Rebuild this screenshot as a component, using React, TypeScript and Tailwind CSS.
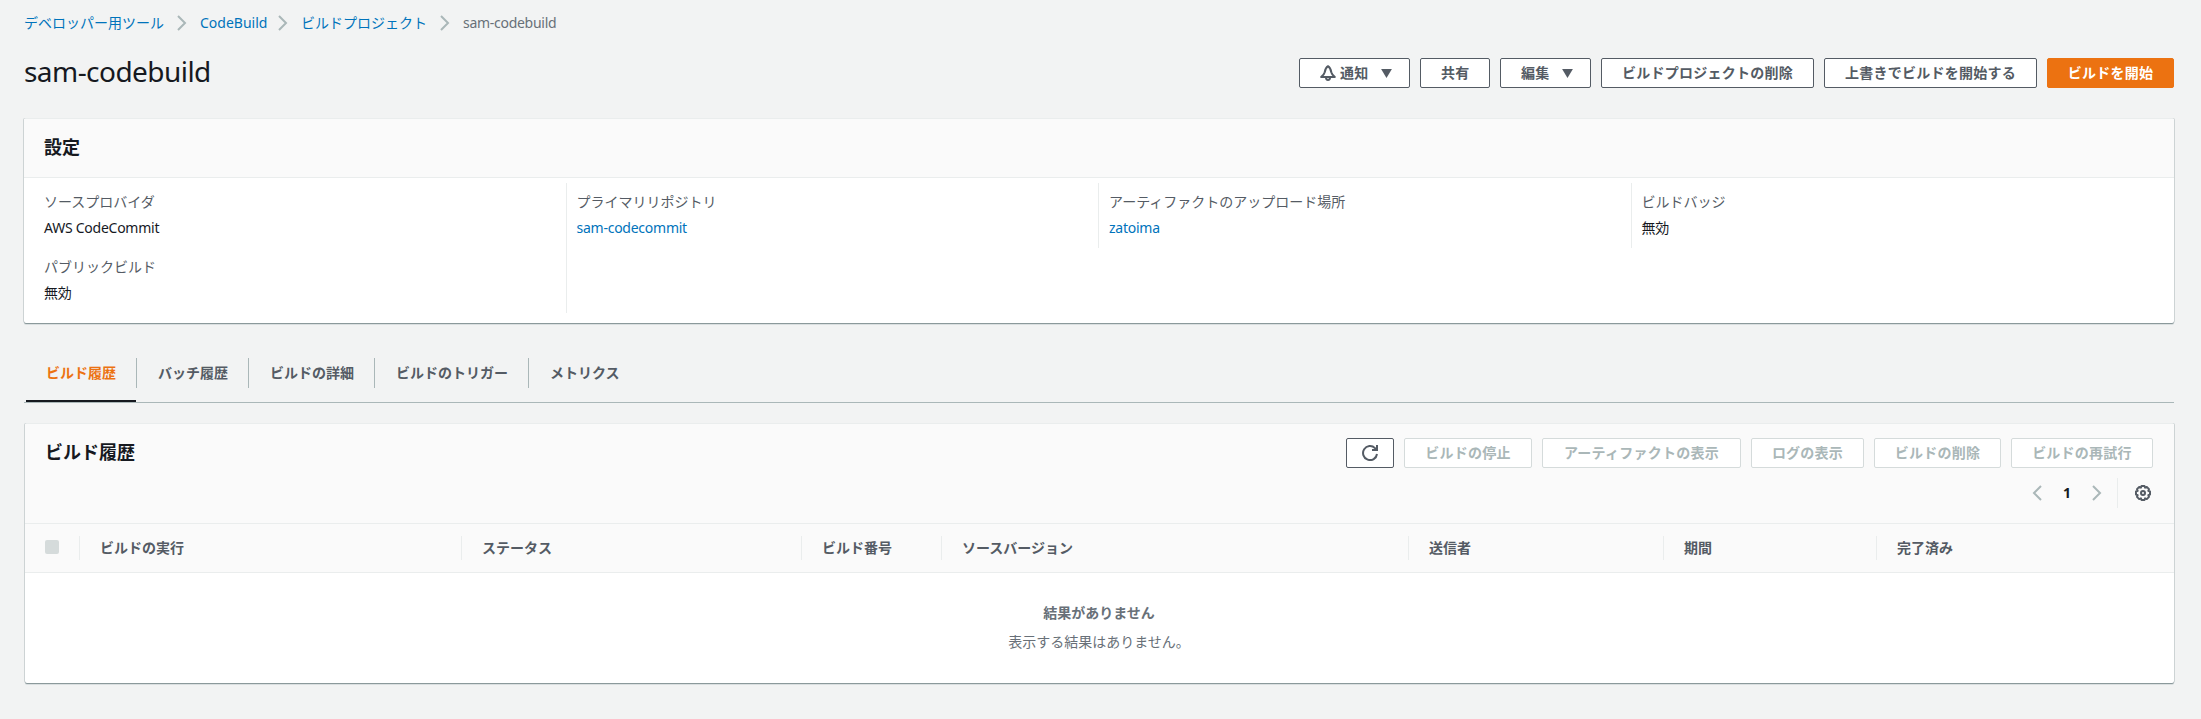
import React from "react";

function Chevron({ dir = "right", className = "" }: { dir?: "left" | "right"; className?: string }) {
  return (
    <svg viewBox="0 0 16 16" className={`h-4 w-4 shrink-0 ${className}`} fill="none" stroke="#aab7b8" strokeWidth="2">
      <path d={dir === "right" ? "M4 1l7 7-7 7" : "M12 1L5 8l7 7"} />
    </svg>
  );
}

function Caret() {
  return (
    <svg viewBox="0 0 12 10" className="h-[9px] w-[11px] shrink-0" fill="#545b64">
      <path d="M0 0h12L6 10z" />
    </svg>
  );
}

function Bell() {
  return (
    <svg viewBox="0 0 16 16" className="h-4 w-4 shrink-0" fill="none" stroke="#545b64" strokeWidth="2" strokeLinejoin="round">
      <path d="M8 1.200C5.600 2.600 5.200 4.600 4.700 7.200 4.300 9 3.200 10.200 1.200 12h13.600c-2-1.800-3.100-3-3.500-4.800C10.800 4.600 10.400 2.600 8 1.200z" />
      <path d="M6 12.500c0 3.200 4 3.200 4 0" />
    </svg>
  );
}

function Refresh() {
  return (
    <svg viewBox="0 0 16 16" className="h-4 w-4 shrink-0" fill="none" stroke="#545b64" strokeWidth="2">
      <path d="M15 9a7 7 0 1 1-2-5.900L14.500 5" />
      <path d="M15 0v5H10" />
    </svg>
  );
}

function Gear() {
  return (
    <svg viewBox="0 0 16 16" className="h-4 w-4 shrink-0" fill="none" stroke="#545b64" strokeWidth="2" strokeLinejoin="round">
      <path d="M6.500 1h3l.6 1.600 1.700-.7 2.200 2.200-.7 1.700 1.700.7v3l-1.700.7.7 1.700-2.200 2.200-1.700-.7-.6 1.600h-3l-.6-1.600-1.700.7L2 11.900l.7-1.700L1 9.500v-3l1.700-.7L2 4.100l2.200-2.200 1.700.7z" />
      <circle cx="8" cy="8" r="2" />
    </svg>
  );
}

const buttonBase =
  "flex h-[30px] shrink-0 items-center rounded-[2px] border text-[14px] font-bold leading-[20px] tracking-[0.25px] whitespace-nowrap";

function Button({ children, className = "" }: { children: React.ReactNode; className?: string }) {
  return <button className={`${buttonBase} border-[#545b64] bg-white text-[#545b64] ${className}`}>{children}</button>;
}

function DisabledButton({ children, className = "" }: { children: React.ReactNode; className?: string }) {
  return (
    <button disabled className={`${buttonBase} justify-center border-[#d5dbdb] bg-white text-[#aab7b8] ${className}`}>
      {children}
    </button>
  );
}

function Field({ label, value, link }: { label: string; value: string; link?: boolean }) {
  return (
    <div className="h-[65px] pt-[8px] text-[14px] leading-[22px]">
      <div className="text-[#545b64]">{label}</div>
      <div className={`mt-[4px] tracking-[-0.25px] ${link ? "text-[#0073bb]" : "text-[#16191f]"}`}>{value}</div>
    </div>
  );
}

const panel =
  "rounded-[2px] border-t border-[#eaeded] bg-white shadow-[0_1px_0_0_#8b999b,0_2px_0_0_#dadfe0,1px_0_0_0_#cdd3d4,-1px_0_0_0_#cdd3d4]";

const tabs = [
  { label: "ビルド履歴", width: "w-[110px]" },
  { label: "バッチ履歴", width: "w-[112px]" },
  { label: "ビルドの詳細", width: "w-[126px]" },
  { label: "ビルドのトリガー", width: "w-[154px]" },
  { label: "メトリクス", width: "w-[112px]" },
];

const columns = [
  { label: "ビルドの実行", width: "w-[382px]" },
  { label: "ステータス", width: "w-[340px]" },
  { label: "ビルド番号", width: "w-[140px]" },
  { label: "ソースバージョン", width: "w-[467px]" },
  { label: "送信者", width: "w-[255px]" },
  { label: "期間", width: "w-[213px]" },
  { label: "完了済み", width: "w-[200px]" },
];

export default function App() {
  return (
    <div className="flex h-[719px] w-[2201px] flex-col overflow-hidden bg-[#f2f3f3] pl-[24px] font-['Noto_Sans','Noto_Sans_CJK_JP',sans-serif] text-[14px] leading-[22px] text-[#16191f]">
      <nav className="mt-[12px] flex h-[22px] items-center">
        <a className="w-[140px] text-[#0073bb]">デベロッパー用ツール</a>
        <Chevron className="mx-[10px]" />
        <a className="w-[65px] text-[#0073bb]">CodeBuild</a>
        <Chevron className="mx-[10px]" />
        <a className="w-[126px] text-[#0073bb]">ビルドプロジェクト</a>
        <Chevron className="mx-[10px]" />
        <span className="tracking-[-0.28px] text-[#687078]">sam-codebuild</span>
      </nav>

      <header className="mt-[21px] flex h-[36px] w-[2150px] items-center justify-between">
        <h1 className="-mt-[4px] text-[28px] leading-[36px] tracking-[-0.55px]">sam-codebuild</h1>
        <div className="flex gap-[10px]">
          <Button className="w-[111px] pl-[20px]">
            <Bell />
            <span className="ml-[4px] mr-[12px]">通知</span>
            <Caret />
          </Button>
          <Button className="w-[70px] pl-[20px]">共有</Button>
          <Button className="w-[91px] pl-[20px]">
            <span className="mr-[12px]">編集</span>
            <Caret />
          </Button>
          <Button className="w-[213px] pl-[20px]">ビルドプロジェクトの削除</Button>
          <Button className="w-[213px] pl-[20px]">上書きでビルドを開始する</Button>
          <button className={`${buttonBase} w-[127px] justify-center border-[#ec7211] bg-[#ec7211] text-white`}>
            ビルドを開始
          </button>
        </div>
      </header>

      <section className={`${panel} mt-[27px] h-[205px] w-[2150px] shrink-0`}>
        <div className="flex h-[59px] items-center border-b border-[#eaeded] bg-[#fafafa] pb-[2px] pl-[20px]">
          <h2 className="text-[18px] font-bold leading-[22px]">設定</h2>
        </div>
        <div className="grid grid-cols-4 items-start pl-[9px] pr-[11px] pt-[5px]">
          <div className="pl-[11px]">
            <Field label="ソースプロバイダ" value="AWS CodeCommit" />
            <Field label="パブリックビルド" value="無効" />
          </div>
          <div className="h-[130px] border-l border-[#eaeded] pl-[10px]">
            <Field label="プライマリリポジトリ" value="sam-codecommit" link />
          </div>
          <div className="border-l border-[#eaeded] pl-[10px]">
            <Field label="アーティファクトのアップロード場所" value="zatoima" link />
          </div>
          <div className="border-l border-[#eaeded] pl-[10px]">
            <Field label="ビルドバッジ" value="無効" />
          </div>
        </div>
      </section>

      <div className="mt-[23px] flex h-[57px] w-[2150px] shrink-0 border-b border-[#aab7b8] pl-[2px]">
        {tabs.map((t, i) => (
          <div
            key={t.label}
            className={`flex h-[56px] flex-col ${t.width} ${i === 0 ? "border-b-2 border-[#16191f] text-[#ec7211]" : "text-[#545b64]"}`}
          >
            <div
              className={`mt-[12px] flex h-[30px] items-center font-bold whitespace-nowrap ${
                i > 0 ? "border-l border-[#aab7b8] pl-[21px]" : "pl-[20px]"
              }`}
            >
              {t.label}
            </div>
          </div>
        ))}
      </div>

      <section className={`${panel} ml-[1px] mt-[20px] flex h-[260px] w-[2149px] shrink-0 flex-col`}>
        <div className="h-[100px] shrink-0 border-b border-[#eaeded] bg-[#fafafa] pl-[20px] pr-[21px]">
          <div className="flex items-center justify-between pt-[14px]">
            <h2 className="-mt-[2px] text-[18px] font-bold leading-[22px]">ビルド履歴</h2>
            <div className="flex gap-[10px]">
              <Button className="w-[48px] justify-center">
                <Refresh />
              </Button>
              <DisabledButton className="w-[128px]">ビルドの停止</DisabledButton>
              <DisabledButton className="w-[199px]">アーティファクトの表示</DisabledButton>
              <DisabledButton className="w-[113px]">ログの表示</DisabledButton>
              <DisabledButton className="w-[127px]">ビルドの削除</DisabledButton>
              <DisabledButton className="w-[142px]">ビルドの再試行</DisabledButton>
            </div>
          </div>
          <div className="mt-[10px] flex h-[30px] items-center justify-end">
            <Chevron dir="left" />
            <span className="w-[44px] text-center font-bold">1</span>
            <Chevron />
            <div className="ml-[12px] h-[30px] w-px bg-[#eaeded]" />
            <div className="ml-[17px] mr-[2px]">
              <Gear />
            </div>
          </div>
        </div>
        <div className="flex h-[49px] shrink-0 items-center border-b border-[#eaeded] bg-[#fafafa] font-bold text-[#545b64]">
          <div className="w-[54px] pl-[20px]">
            <div className="-mt-[2px] h-[14px] w-[14px] rounded-[2px] bg-[#d5dbdb]" />
          </div>
          {columns.map((c) => (
            <div key={c.label} className={`flex h-[24px] shrink-0 items-center border-l border-[#eaeded] pl-[20px] ${c.width}`}>
              {c.label}
            </div>
          ))}
        </div>
        <div className="flex flex-col items-center pr-[1px] pt-[29px] text-[#687078]">
          <div className="font-bold">結果がありません</div>
          <div className="mt-[7px]">表示する結果はありません。</div>
        </div>
      </section>
    </div>
  );
}
